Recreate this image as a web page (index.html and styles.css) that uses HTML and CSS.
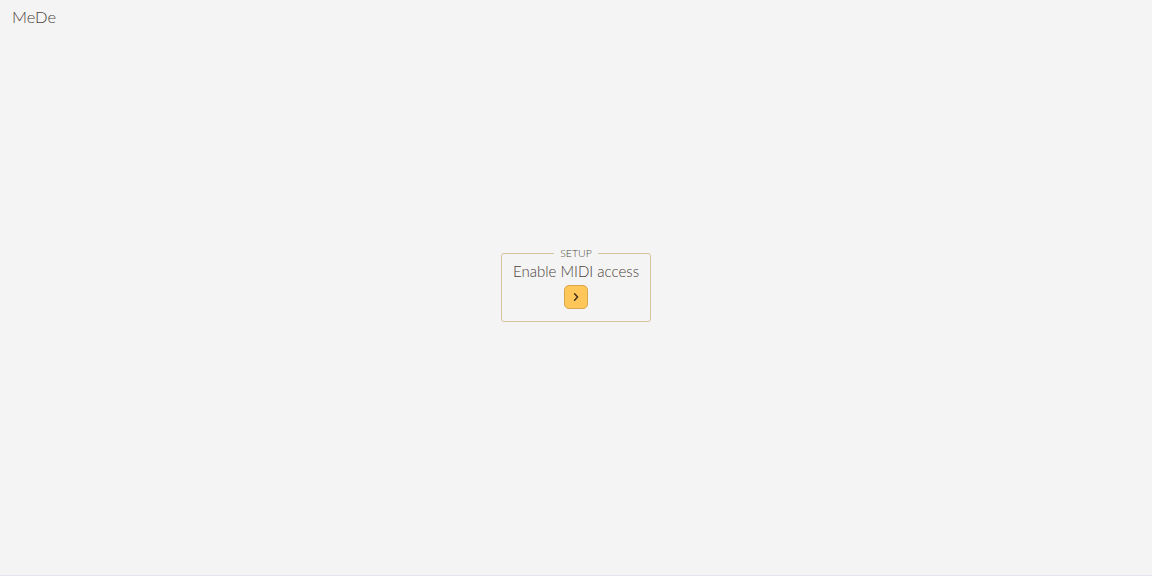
FILE: index.html
```html
<!DOCTYPE html>
<html lang="en">
<head>
<meta charset="utf-8">
<title>MeDe</title>
<link rel="stylesheet" href="styles.css">
</head>
<body>
<div class="app">
  <header class="header"><span class="brand">MeDe</span></header>
  <main class="stage">
    <fieldset class="setup">
      <legend class="setup-legend">SETUP</legend>
      <div class="setup-text">Enable MIDI access</div>
      <button class="go" type="button" aria-label="Enable">
        <svg width="10" height="10" viewBox="0 0 10 10"><path d="M3.6 1.8 L6.6 5 L3.6 8.2" fill="none" stroke="#3f3220" stroke-width="1.5" stroke-linecap="round" stroke-linejoin="round"/></svg>
      </button>
    </fieldset>
  </main>
</div>
</body>
</html>
```
FILE: styles.css
```css
html, body {
  margin: 0;
  padding: 0;
  height: 100%;
}
body {
  background: #f4f4f4;
  font-family: "Lato", "Noto Sans", sans-serif;
  font-weight: 300;
  color: #4f463c;
}
.app {
  display: grid;
  height: 100vh;
  border-bottom: 1px solid #e6e4ec;
  box-sizing: border-box;
}
.header, .stage {
  grid-area: 1 / 1;
}
.header {
  align-self: start;
  padding: 7px 12px;
}
.brand {
  font-size: 16.5px;
  color: #4a4138;
}
.stage {
  display: flex;
  align-items: center;
  justify-content: center;
}
.setup {
  margin: 0;
  width: 150px;
  box-sizing: border-box;
  border: 1px solid #d6c29c;
  border-radius: 3px;
  padding: 3px 8px 12px;
  display: flex;
  flex-direction: column;
  align-items: center;
  margin-top: -6px;
}
.setup-legend {
  margin: 0 auto;
  padding: 0 6px;
  font-size: 10.5px;
  color: #4f463c;
}
.setup-text {
  font-size: 15px;
  line-height: 18px;
  white-space: nowrap;
  color: #4a4138;
}
.go {
  margin-top: 5px;
  width: 24px;
  height: 24px;
  padding: 0;
  border: 1px solid #d8a74a;
  border-radius: 5px;
  background: #ffc65a;
  display: flex;
  align-items: center;
  justify-content: center;
  cursor: pointer;
}
```
